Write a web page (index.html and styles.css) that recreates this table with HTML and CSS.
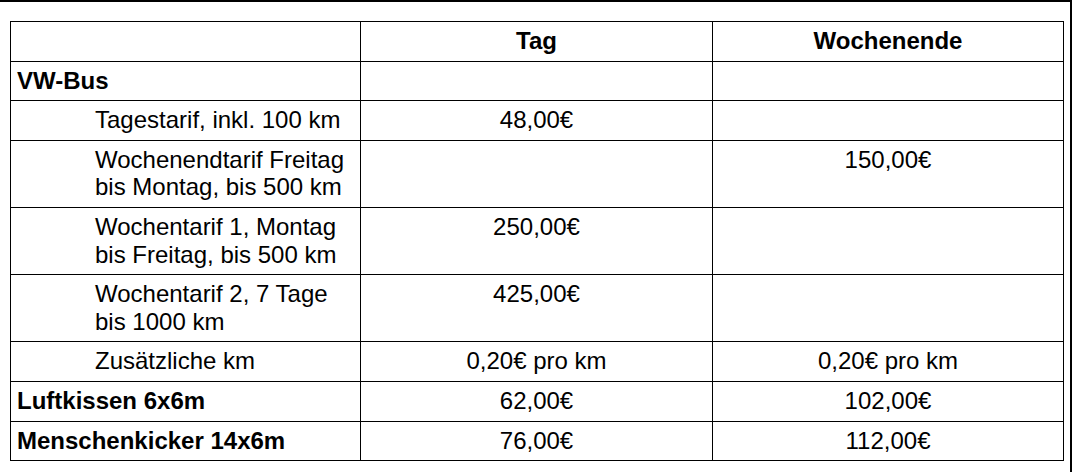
FILE: index.html
```html
<!DOCTYPE html>
<html lang="de">
<head>
<meta charset="utf-8">
<title>Preise</title>
<link rel="stylesheet" href="styles.css">
</head>
<body>
<div class="frame">
  <table class="prices">
    <colgroup>
      <col class="c1"><col class="c2"><col class="c3">
    </colgroup>
    <tr>
      <th class="name"></th>
      <th>Tag</th>
      <th>Wochenende</th>
    </tr>
    <tr>
      <td class="group">VW-Bus</td>
      <td></td>
      <td></td>
    </tr>
    <tr>
      <td class="sub">Tagestarif, inkl. 100 km</td>
      <td class="val">48,00€</td>
      <td class="val"></td>
    </tr>
    <tr>
      <td class="sub">Wochenendtarif Freitag<br>bis Montag, bis 500 km</td>
      <td class="val"></td>
      <td class="val">150,00€</td>
    </tr>
    <tr>
      <td class="sub">Wochentarif 1, Montag<br>bis Freitag, bis 500 km</td>
      <td class="val">250,00€</td>
      <td class="val"></td>
    </tr>
    <tr>
      <td class="sub">Wochentarif 2, 7 Tage<br>bis 1000 km</td>
      <td class="val">425,00€</td>
      <td class="val"></td>
    </tr>
    <tr>
      <td class="sub">Zusätzliche km</td>
      <td class="val">0,20€ pro km</td>
      <td class="val">0,20€ pro km</td>
    </tr>
    <tr>
      <td class="group">Luftkissen 6x6m</td>
      <td class="val">62,00€</td>
      <td class="val">102,00€</td>
    </tr>
    <tr>
      <td class="group">Menschenkicker 14x6m</td>
      <td class="val">76,00€</td>
      <td class="val">112,00€</td>
    </tr>
  </table>
</div>
</body>
</html>
```

FILE: styles.css
```css
html, body {
  margin: 0;
  padding: 0;
  background: #fff;
}

.frame {
  width: 1072px;
  height: 472px;
  box-sizing: border-box;
  border-top: 2px solid #000;
  border-right: 2px solid #000;
  padding: 19px 0 0 10px;
  overflow: hidden;
}

.prices {
  border-collapse: collapse;
  table-layout: fixed;
  width: 1053px;
  font-family: "Liberation Sans", Arial, sans-serif;
  font-size: 24px;
  line-height: 1.15;
  color: #000;
}

.c1 { width: 350px; }
.c2 { width: 352px; }
.c3 { width: 351px; }

.prices th,
.prices td {
  border: 1px solid #000;
  padding: 5px 6px 6px 6px;
  vertical-align: top;
}

.prices th {
  font-weight: bold;
  text-align: center;
  height: 27px;
}

.group {
  font-weight: bold;
  text-align: left;
}

.sub {
  padding-left: 84px !important;
  text-align: left;
}

.val {
  text-align: center;
}
```
